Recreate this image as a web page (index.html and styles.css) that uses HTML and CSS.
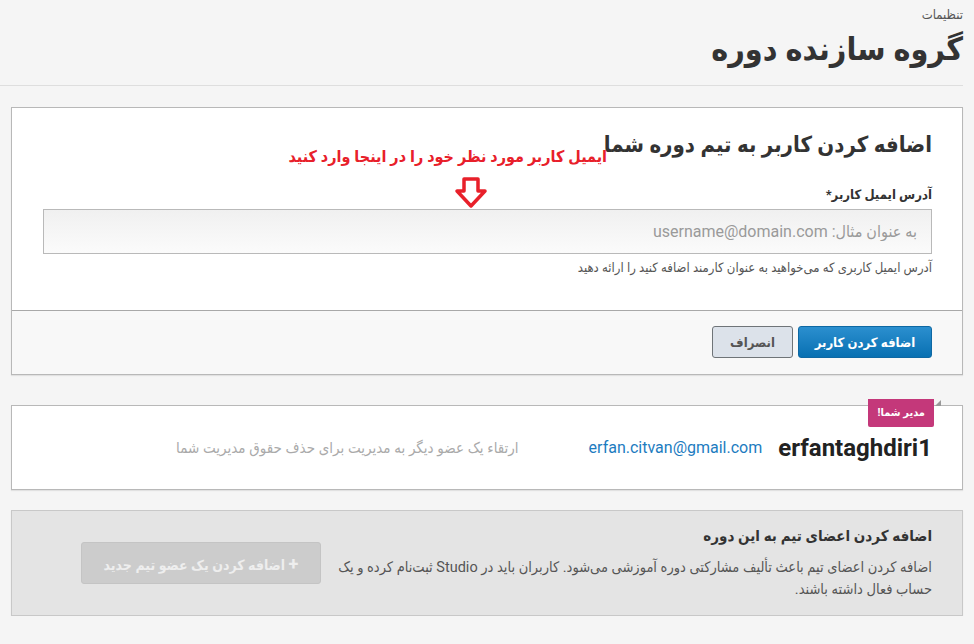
FILE: index.html
```html
<!DOCTYPE html>
<html lang="fa" dir="rtl">
<head>
    <meta charset="UTF-8">
    <meta name="viewport" content="width=device-width, initial-scale=1.0">
    <title>گروه سازنده دوره</title>
    <link rel="stylesheet" href="styles.css">
</head>
<body>
    <header class="page-header">
        <div class="crumb">تنظیمات</div>
        <h1>گروه سازنده دوره</h1>
    </header>

    <!-- فرم افزودن کاربر -->
    <section class="card add-card">
        <div class="card-body">
            <h2>اضافه کردن کاربر به تیم دوره شما</h2>
            <div class="note">ایمیل کاربر مورد نظر خود را در اینجا وارد کنید</div>
            <svg class="note-arrow" width="34" height="32" viewBox="0 0 34 32">
                <path d="M10 2 H24 V14 H31 L17 29 L3 14 H10 Z" fill="none" stroke="#e8202a" stroke-width="3.5" stroke-linejoin="round"/>
            </svg>
            <label class="field-label" for="email">آدرس ایمیل کاربر*</label>
            <input class="field-input" type="email" id="email" placeholder="به عنوان مثال: username@domain.com">
            <div class="field-hint">آدرس ایمیل کاربری که می‌خواهید به عنوان کارمند اضافه کنید را ارائه دهید</div>
        </div>
        <div class="card-footer">
            <button class="btn btn-primary">اضافه کردن کاربر</button>
            <button class="btn btn-cancel">انصراف</button>
        </div>
    </section>

    <!-- عضو فعلی -->
    <section class="card member-card">
        <span class="badge">مدیر شما!</span>
        <span class="badge-fold"></span>
        <div class="member-row">
            <span class="member-name">erfantaghdiri1</span>
            <span class="member-email">erfan.citvan@gmail.com</span>
            <span class="member-note">ارتقاء یک عضو دیگر به مدیریت برای حذف حقوق مدیریت شما</span>
        </div>
    </section>

    <!-- راهنما -->
    <section class="card info-card">
        <div class="info-text">
            <h3>اضافه کردن اعضای تیم به این دوره</h3>
            <p>اضافه کردن اعضای تیم باعث تألیف مشارکتی دوره آموزشی می‌شود. کاربران باید در Studio ثبت‌نام کرده و یک حساب فعال داشته باشند.</p>
        </div>
        <button class="btn btn-disabled" disabled><span class="plus">+</span> اضافه کردن یک عضو تیم جدید</button>
    </section>
</body>
</html>
```

FILE: styles.css
```css
body { margin: 0; background: #f5f5f5; color: #333; font-family: Roboto, "DejaVu Sans Condensed", "DejaVu Sans", sans-serif; direction: rtl; }
.page-header { margin-right: 11px; padding: 6px 0 15px; border-bottom: 1px solid #dedede; }
.crumb { font-size: 13px; color: #555; line-height: 18px; }
.page-header h1 { margin: 4px 0 0; font-size: 32px; line-height: 42px; color: #333; }

.card { position: relative; margin: 21px 11px 0; background: #fff; border: 1px solid #b8b8b8; box-shadow: 0 1px 1px rgba(0,0,0,0.08); }
.card-body { position: relative; padding: 20px 30px 33px 31px; }
.card-body h2 { margin: 0; font-size: 22px; line-height: 34px; color: #333; }
.note { position: absolute; right: 355px; top: 39px; color: #e8202a; font-size: 16px; font-weight: bold; white-space: nowrap; }
.note-arrow { position: absolute; left: 442px; top: 69px; }
.field-label { display: block; margin-top: 22px; font-size: 13px; font-weight: bold; color: #333; line-height: 22px; }
.field-input { display: block; box-sizing: border-box; width: 100%; height: 45px; margin-top: 3px; padding: 0 14px; border: 1px solid #b9b9b9; background: linear-gradient(#f0f0f0, #fbfbfb); font-family: Roboto, "DejaVu Sans Condensed", "DejaVu Sans", sans-serif; font-size: 16px; color: #333; direction: rtl; }
.field-input::placeholder { color: #9a9a9a; }
.field-hint { margin-top: 5px; font-size: 13px; color: #555; line-height: 18px; }

.card-footer { display: flex; gap: 5px; padding: 15px 30px 16px; background: #f8f8f8; border-top: 1px solid #a8a8a8; }
.btn { height: 32px; padding: 0 10px; border-radius: 3px; font-family: Roboto, "DejaVu Sans Condensed", "DejaVu Sans", sans-serif; font-size: 13px; font-weight: bold; white-space: nowrap; cursor: pointer; }
.btn-primary { width: 134px; background: linear-gradient(#2b8fcf, #0870b2); border: 1px solid #0e68a3; color: #fff; }
.btn-cancel { width: 81px; background: #dce2ea; border: 1px solid #6f7478; color: #555; }

.member-card { margin-top: 30px; height: 83px; }
.badge { position: absolute; right: 28px; top: -7px; padding: 0 9px; height: 28px; line-height: 28px; background: #c4387a; color: #fff; font-size: 11px; font-weight: bold; border-radius: 0 0 2px 2px; }
.badge-fold { position: absolute; right: 21px; top: -6px; border-left: 6px solid transparent; border-bottom: 6px solid #999; }
.member-row { display: flex; align-items: center; height: 100%; padding: 0 30px; }
.member-name { font-size: 24px; font-weight: bold; color: #222; direction: ltr; }
.member-email { margin-right: 16px; font-size: 16px; color: #1d7cbf; direction: ltr; }
.member-note { margin-right: 70px; font-size: 15px; color: #aaa; }

.info-card { display: flex; align-items: center; gap: 8px; margin-top: 20px; padding: 14px 30px 14px 69px; background: #e4e4e4; border-color: #c8c8c8; }
.info-text { flex: 1; }
.info-text h3 { margin: 0 0 10px; font-size: 15px; line-height: 22px; color: #333; }
.info-text p { margin: 0; font-size: 14.5px; line-height: 22px; color: #555; }
.btn-disabled { flex: none; width: 240px; height: 42px; background: #ccc; border: 1px solid #c4c4c4; color: #eee; font-size: 14px; cursor: default; }
.plus { font-size: 18px; }
```
